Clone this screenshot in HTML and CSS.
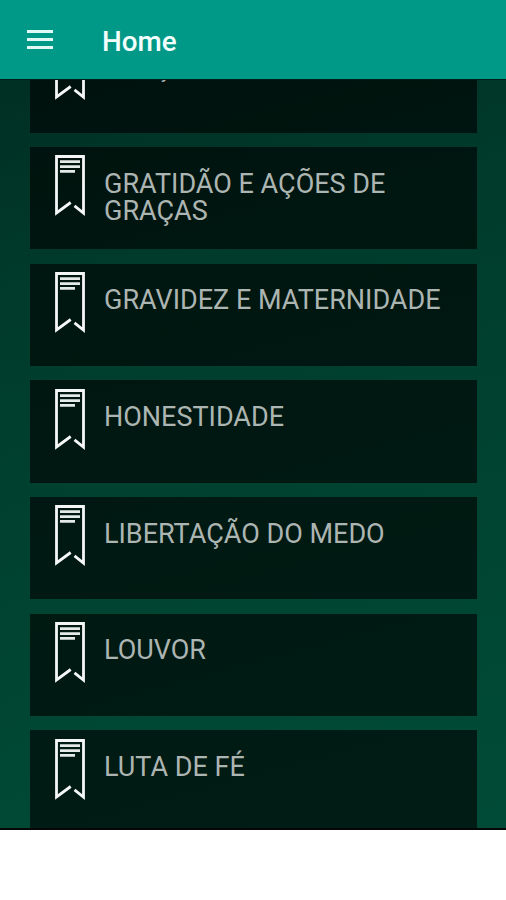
FILE: index.html
```html
<!DOCTYPE html>
<html lang="pt-BR">
<head>
    <meta charset="UTF-8">
    <meta name="viewport" content="width=device-width, initial-scale=1.0">
    <title>Home</title>
    <link rel="stylesheet" href="styles.css">
</head>
<body>
    <svg class="sprite" width="0" height="0">
        <symbol id="bookmark" viewBox="0 0 30 61">
            <path d="M15.7 47.5 L1.5 58 V1.5 H28.5 V58 L19.5 50.8" fill="none" stroke="#f4f7f6" stroke-width="2.8"/>
            <path d="M5 6.7 H25 M5 11.6 H25 M5 16.4 H20" fill="none" stroke="#e4eae8" stroke-width="2.7"/>
        </symbol>
    </svg>

    <header class="header">
        <button class="menu-btn" aria-label="Menu">
            <span></span>
            <span></span>
            <span></span>
        </button>
        <h1 class="header-title">Home</h1>
    </header>

    <main class="content">
        <div class="list">
            <a class="card"><svg class="icon"><use href="#bookmark"/></svg><span class="card-title">FORÇA</span></a>
            <a class="card"><svg class="icon"><use href="#bookmark"/></svg><span class="card-title">GRATIDÃO E AÇÕES DE GRAÇAS</span></a>
            <a class="card"><svg class="icon"><use href="#bookmark"/></svg><span class="card-title">GRAVIDEZ E MATERNIDADE</span></a>
            <a class="card"><svg class="icon"><use href="#bookmark"/></svg><span class="card-title">HONESTIDADE</span></a>
            <a class="card"><svg class="icon"><use href="#bookmark"/></svg><span class="card-title">LIBERTAÇÃO DO MEDO</span></a>
            <a class="card"><svg class="icon"><use href="#bookmark"/></svg><span class="card-title">LOUVOR</span></a>
            <a class="card"><svg class="icon"><use href="#bookmark"/></svg><span class="card-title">LUTA DE FÉ</span></a>
        </div>
    </main>

    <footer class="ad-space"></footer>
</body>
</html>
```
FILE: styles.css
```css
* {
    margin: 0;
    padding: 0;
    box-sizing: border-box;
}

body {
    display: flex;
    flex-direction: column;
    height: 900px;
    overflow: hidden;
    font-family: Roboto, sans-serif;
    background-color: #fff;
}

.sprite {
    display: none;
}

.header {
    display: flex;
    align-items: center;
    flex: none;
    height: 79px;
    padding: 4px 27px 0;
    background-color: #009988;
}

.menu-btn {
    display: flex;
    flex-direction: column;
    gap: 4.5px;
    width: 26px;
    margin-right: 49px;
    padding-bottom: 4px;
    border: none;
    background: none;
    cursor: pointer;
}

.menu-btn span {
    height: 3.4px;
    background-color: #e2faf5;
}

.header-title {
    font-size: 27.8px;
    font-weight: 500;
    color: #f2fffc;
}

.content {
    flex: none;
    height: 751px;
    overflow: hidden;
    border-top: 1px solid #00201a;
    border-bottom: 2px solid #050807;
    background: linear-gradient(165deg, #002f23 0%, #003b2b 25%, #00412f 50%, #004935 85%, #004b37 100%);
}

/* list is scrolled, the first card sits partly under the header */
.list {
    display: flex;
    flex-direction: column;
    gap: 14.4px;
    margin-top: -49.7px;
    padding: 0 29px 0 30px;
}

.card {
    display: flex;
    align-items: flex-start;
    flex: none;
    height: 102.3px;
    padding: 8.2px 20px 0 24.6px;
    background-color: rgba(0, 0, 0, 0.62);
}

.icon {
    flex: none;
    width: 30px;
    height: 61px;
    margin-right: 19.4px;
}

.card-title {
    padding-top: 15.4px;
    font-size: 27px;
    line-height: 27px;
    color: #adb5b2;
}

.ad-space {
    flex: 1;
    background-color: #fff;
}
```
